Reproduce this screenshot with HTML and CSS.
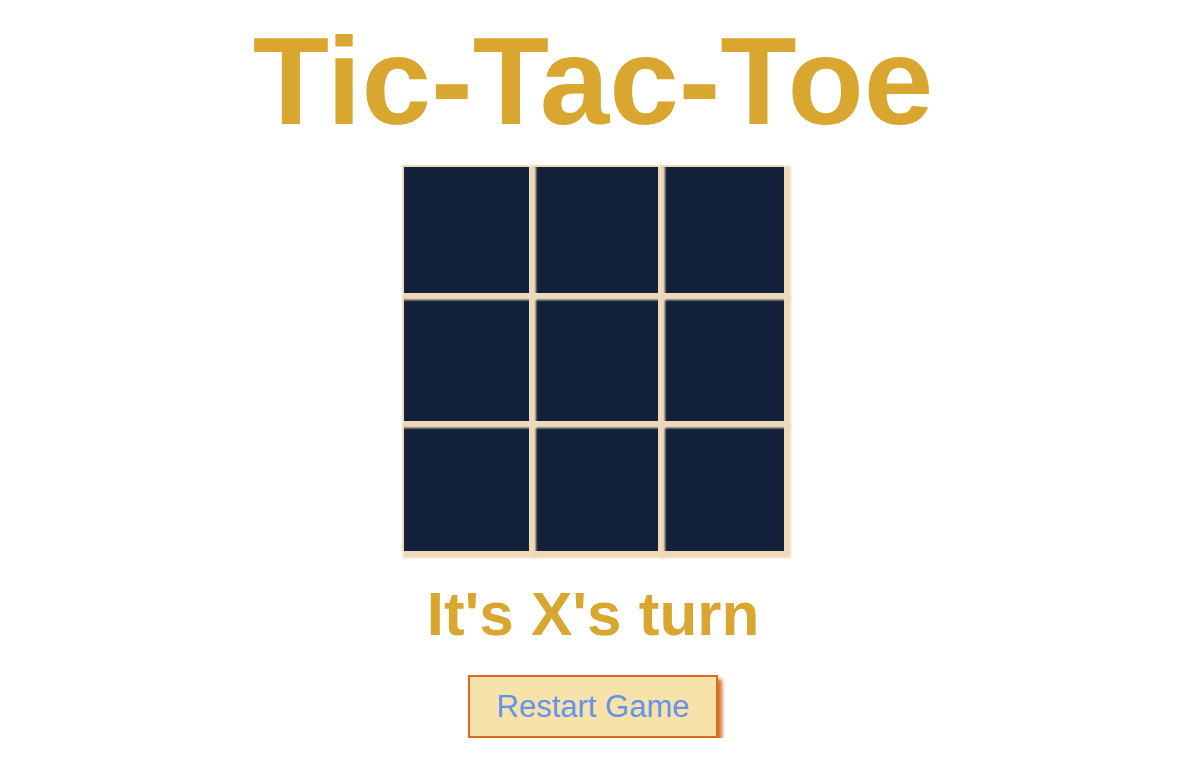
FILE: index.html
```html
<!DOCTYPE html>
<html lang="en">
<head>
<meta charset="utf-8">
<title>Tic-Tac-Toe</title>
<link rel="stylesheet" href="styles.css">
</head>
<body>
<main class="app">
  <h1 class="title">Tic-Tac-Toe</h1>
  <div class="board">
    <div class="cell"></div>
    <div class="cell"></div>
    <div class="cell"></div>
    <div class="cell"></div>
    <div class="cell"></div>
    <div class="cell"></div>
    <div class="cell"></div>
    <div class="cell"></div>
    <div class="cell"></div>
  </div>
  <p class="status">It's X's turn</p>
  <button class="restart" type="button">Restart Game</button>
</main>
</body>
</html>
```

FILE: styles.css
```css
html, body {
  margin: 0;
  padding: 0;
  background: #ffffff;
}

body {
  font-family: "Liberation Sans", Arial, sans-serif;
}

.app {
  display: flex;
  flex-direction: column;
  align-items: center;
  padding-right: 16px;
}

.title {
  margin: 9px 0 0;
  font-size: 125px;
  line-height: 144px;
  font-weight: 700;
  color: #d9a62f;
}

.board {
  margin-top: 12px;
  display: grid;
  grid-template-columns: 127px 127px 124px;
  grid-template-rows: 128px 126px 128px;
  gap: 2px;
}

.cell {
  position: relative;
  background: #13213a;
  border-left: 2px solid #eed9b9;
  border-top: 2px solid #eed9b9;
  box-shadow: 4px 4px 2px 3px #eed9b9;
}

.cell:nth-child(1) { z-index: 9; }
.cell:nth-child(2) { z-index: 8; }
.cell:nth-child(3) { z-index: 7; }
.cell:nth-child(4) { z-index: 6; }
.cell:nth-child(5) { z-index: 5; }
.cell:nth-child(6) { z-index: 4; }
.cell:nth-child(7) { z-index: 3; }
.cell:nth-child(8) { z-index: 2; }
.cell:nth-child(9) { z-index: 1; }

.status {
  margin: 27px 0 0;
  font-size: 62px;
  line-height: 72px;
  font-weight: 700;
  color: #d9a62f;
}

.restart {
  margin-top: 25px;
  width: 250px;
  height: 63px;
  padding: 0;
  box-sizing: border-box;
  background: #f7e3aa;
  border: 2px solid #d96b22;
  box-shadow: 4px 4px 4px #d96b22;
  font-family: "Liberation Sans", Arial, sans-serif;
  font-size: 31px;
  color: #6592ea;
  cursor: pointer;
}
```
